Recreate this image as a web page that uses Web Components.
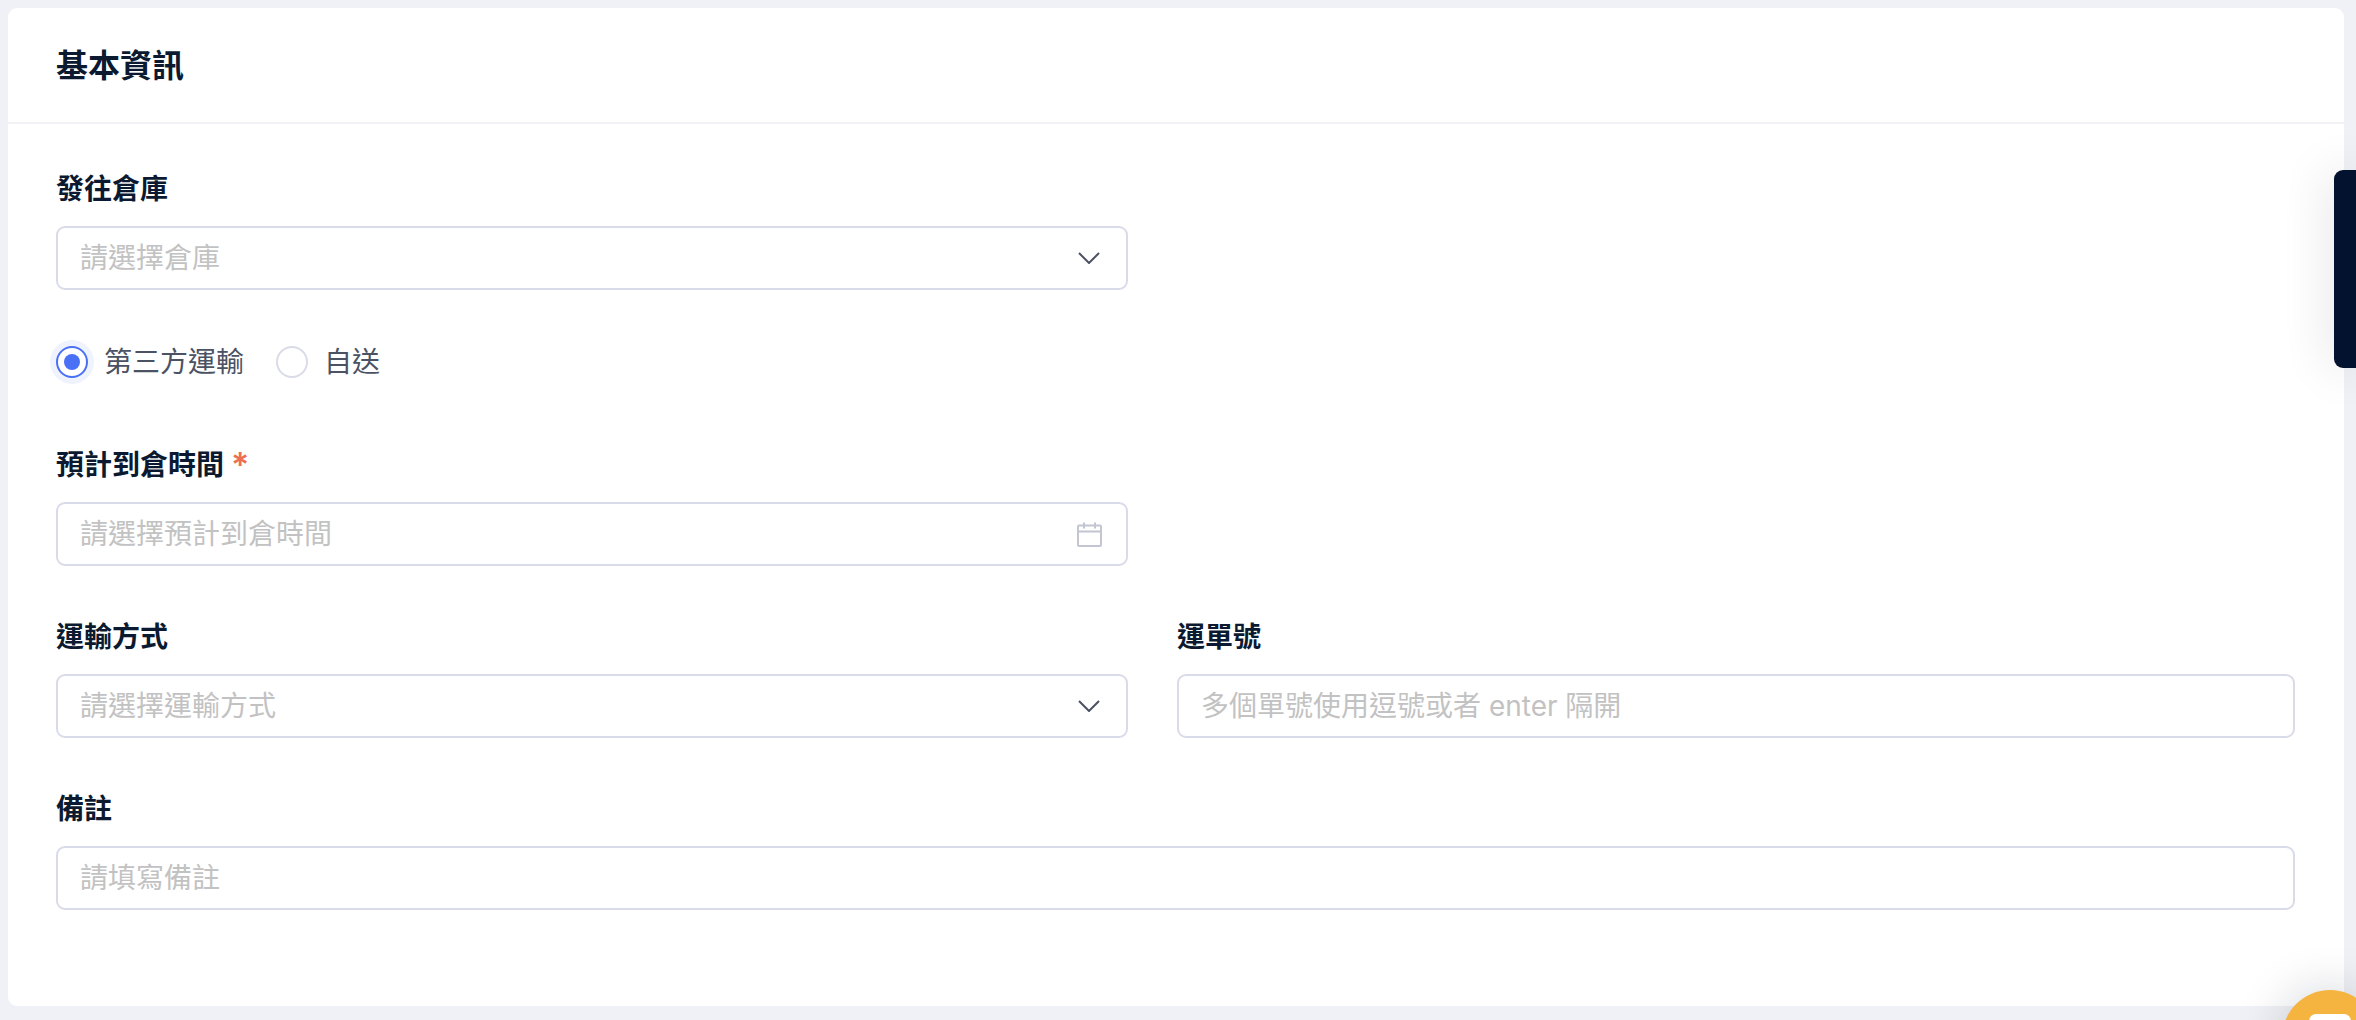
<!DOCTYPE html>
<html lang="zh-Hant">
<head>
<meta charset="utf-8">
<title>基本資訊</title>
<style>
html,body{margin:0;padding:0;height:100%;overflow:hidden;background:#f0f1f6;}
body{font-family:Inter,"Noto Sans CJK TC",sans-serif;box-sizing:border-box;padding:8px 12px 14px 8px;}
</style>
</head>
<body>
<info-card heading="基本資訊">
  <form-row><form-field label="發往倉庫"><field-box placeholder="請選擇倉庫" icon="chevron"></field-box></form-field></form-row>
  <radio-row>
    <radio-item checked>第三方運輸</radio-item>
    <radio-item>自送</radio-item>
  </radio-row>
  <form-row><form-field label="預計到倉時間" required><field-box placeholder="請選擇預計到倉時間" icon="calendar"></field-box></form-field></form-row>
  <form-row>
    <form-field label="運輸方式"><field-box placeholder="請選擇運輸方式" icon="chevron"></field-box></form-field>
    <form-field label="運單號"><field-box placeholder="多個單號使用逗號或者 enter 隔開"></field-box></form-field>
  </form-row>
  <form-field label="備註"><field-box placeholder="請填寫備註"></field-box></form-field>
</info-card>
<side-tab></side-tab>
<chat-bubble></chat-bubble>
<script>
const def=(name,html)=>customElements.define(name,class extends HTMLElement{
  constructor(){super();this.attachShadow({mode:'open'});}
  connectedCallback(){this.shadowRoot.innerHTML=typeof html==='function'?html(this):html;}
});
def('info-card',el=>`<style>
:host{display:block;height:998px;background:#fff;border-radius:9px;box-sizing:border-box;font-family:Inter,"Noto Sans CJK TC",sans-serif;}
header{height:116px;box-sizing:border-box;border-bottom:2px solid #f1f1f6;padding:0 48px 4px;display:flex;align-items:center;font-size:32px;font-weight:600;color:#0b1a30;}
main{padding:47px 49px 0 48px;display:flex;flex-direction:column;gap:53px;}
</style><header>${el.getAttribute('heading')}</header><main><slot></slot></main>`);
def('form-field',el=>`<style>
:host{display:block;min-width:0;}
label{display:flex;align-items:center;gap:7px;height:37px;margin-bottom:18px;font-size:28px;line-height:37px;font-weight:600;color:#0b1a30;}
i{font-style:normal;color:#ee6f4f;font-size:34px;font-weight:600;position:relative;top:-1px;}
</style><label>${el.getAttribute('label')}${el.hasAttribute('required')?'<i>*</i>':''}</label><slot></slot>`);
const icons={
 chevron:`<svg style="margin-right:2px" width="22" height="12" viewBox="0 0 22 12" fill="none"><path d="M1 1l10 10L21 1" stroke="#4a5163" stroke-width="2"/></svg>`,
 calendar:`<svg width="25" height="25" viewBox="0 0 25 25" fill="none" stroke="#c3c6d2" stroke-width="2"><rect x="1" y="3.500" width="23" height="20.500" rx="1"/><path d="M1 9.500h23M7 .5v6M18 .5v6"/></svg>`
};
def('field-box',el=>`<style>
:host{display:flex;align-items:center;justify-content:space-between;height:64px;box-sizing:border-box;border:2px solid #d9dbe8;border-radius:9px;padding:0 24px 0 22px;background:#fff;font-size:28px;color:#c2c2c2;}
span{line-height:38px;white-space:pre;}
.ic{display:flex;}
</style><span>${el.getAttribute('placeholder')}</span>${el.getAttribute('icon')?`<div class="ic">${icons[el.getAttribute('icon')]}</div>`:''}`);
def('form-row',`<style>:host{display:grid;grid-template-columns:1072px 1fr;column-gap:49px;}</style><slot></slot>`);
def('radio-row',`<style>:host{display:flex;align-items:center;gap:32px;height:42px;margin:-2px 0 11px;}</style><slot></slot>`);
def('radio-item',el=>`<style>
:host{display:inline-flex;align-items:center;gap:16px;font-size:28px;color:#4b5263;line-height:38px;}
.r{width:32px;height:32px;box-sizing:border-box;border-radius:50%;border:2px solid ${el.hasAttribute('checked')?'#4a70f5':'#d9dbe8'};display:flex;align-items:center;justify-content:center;background:#fff;${el.hasAttribute('checked')?'box-shadow:0 0 0 6px #eef3fe;':''}}
.d{width:16px;height:16px;border-radius:50%;background:#4a70f5;}
</style><div class="r">${el.hasAttribute('checked')?'<div class="d"></div>':''}</div><slot></slot>`);
def('side-tab',`<style>:host{position:fixed;right:0;top:170px;width:22px;height:198px;background:#03122e;border-radius:9px 0 0 9px;box-shadow:0 0 50px rgba(10,20,50,.16);}</style>`);
def('chat-bubble',`<style>
:host{position:fixed;left:2282px;top:990px;width:96px;height:96px;border-radius:50%;background:#f5b440;box-shadow:0 0 50px rgba(10,20,50,.18);}
div{position:absolute;left:27px;top:24px;width:42px;height:34px;background:#fff;border-radius:7px;}
</style><div></div>`);
</script>
</body>
</html>
